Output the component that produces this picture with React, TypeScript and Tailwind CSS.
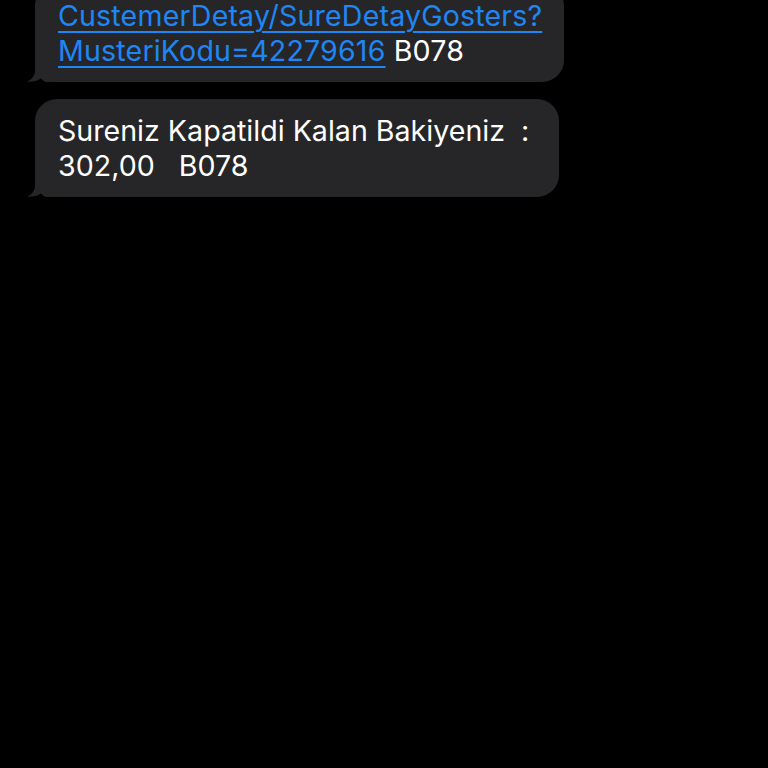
function Tail() {
  return (
    <svg
      className="absolute -left-[9px] bottom-0"
      width="30"
      height="22"
      viewBox="0 0 30 22"
      fill="#262628"
    >
      <path d="M9 0 L30 0 L30 22 L20 22 C17 21 16 19.5 15 18.5 C11 21 6 22 1 21.6 C6 19.5 9 16 9 10 Z" />
    </svg>
  );
}

function Bubble({ children, className = "" }: { children: React.ReactNode; className?: string }) {
  return (
    <div className="relative self-start">
      <div className={`relative z-10 rounded-[22px] bg-[#262628] pl-[23px] py-[14px] text-[28.6px] leading-[35px] text-white ${className}`}>
        {children}
      </div>
      <Tail />
    </div>
  );
}

export default function App() {
  return (
    <div className="min-h-[768px] w-[768px] overflow-hidden bg-black font-['Inter','Noto_Sans',sans-serif]">
      <div className="flex flex-col gap-[17px] pl-[35px] -mt-[16px]">
        <Bubble className="pr-[22px] tracking-[0.16px]">
          <span className="text-[#1e86f5] underline decoration-2 underline-offset-[5px]">
            CustemerDetay/SureDetayGosters?
            <br />
            MusteriKodu=42279616
          </span>{" "}
          B078
        </Bubble>
        <Bubble className="pr-[30px]">
          Sureniz Kapatildi Kalan Bakiyeniz&nbsp; :
          <br />
          302,00&nbsp;&nbsp; B078
        </Bubble>
      </div>
    </div>
  );
}
